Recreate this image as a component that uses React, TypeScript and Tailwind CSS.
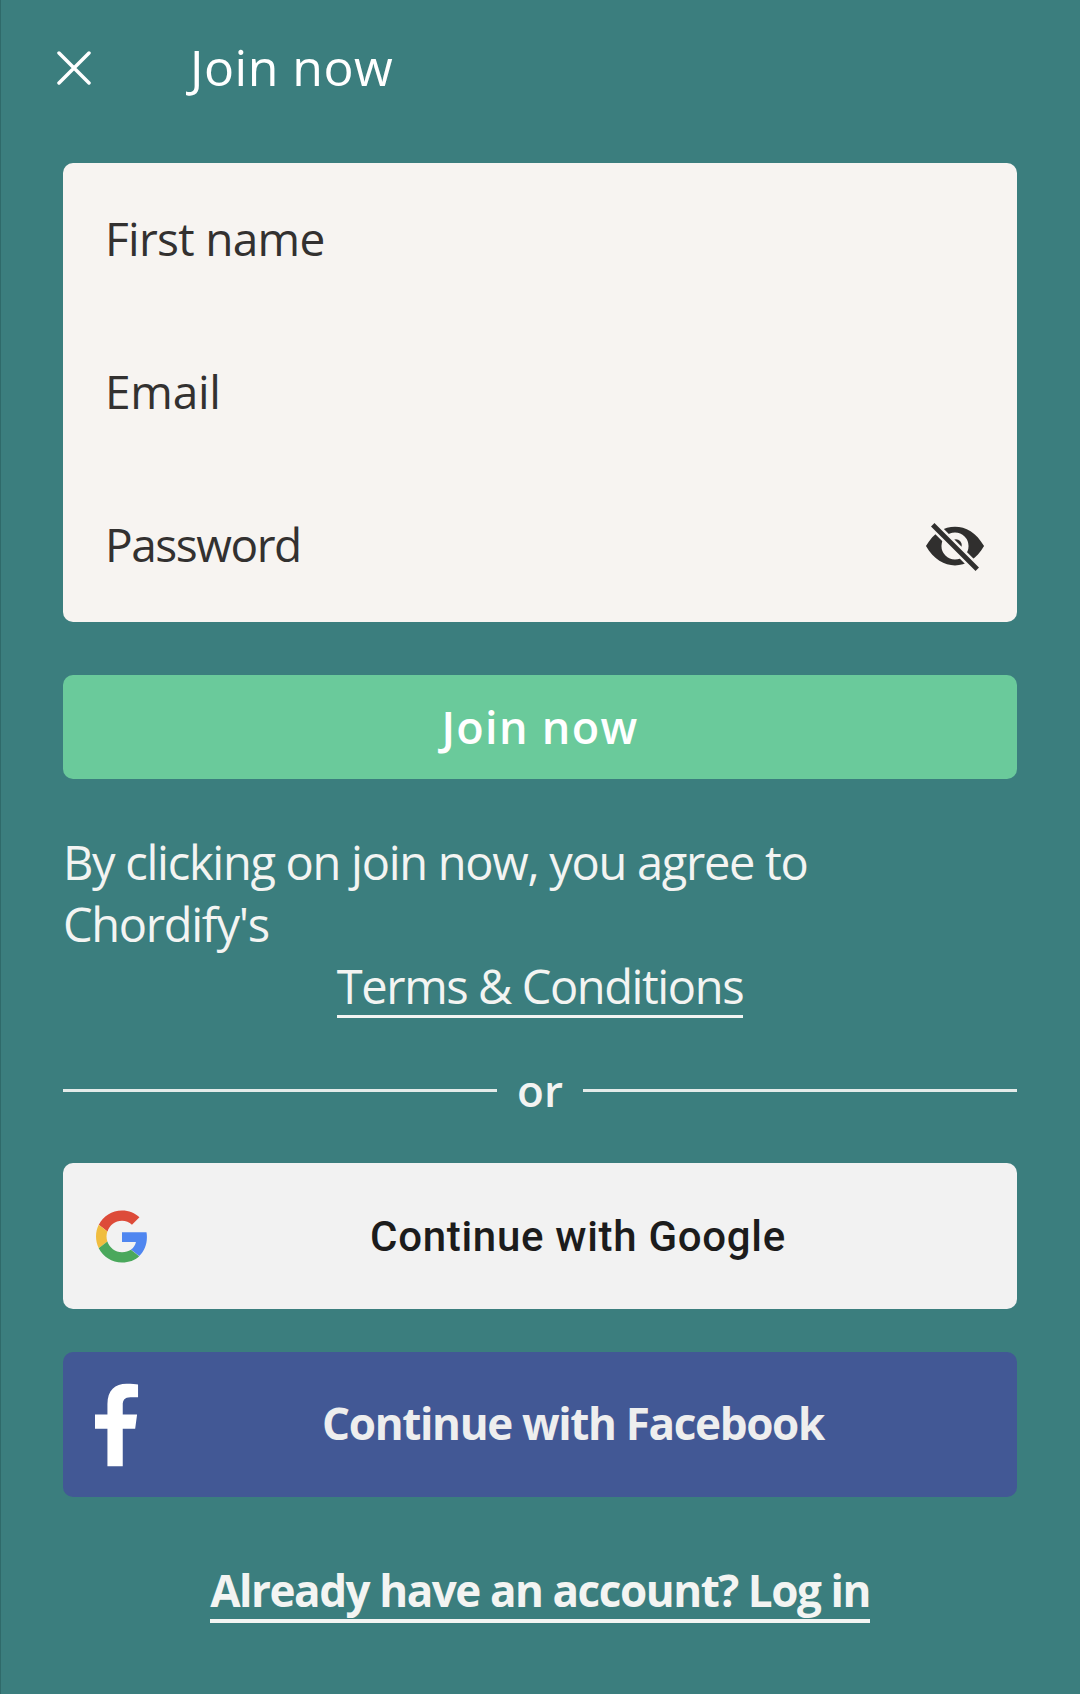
import React from 'react';

const font = "font-['Open_Sans',sans-serif]";

function FormRow({ label, tracking, children }: { label: string; tracking: string; children?: React.ReactNode }) {
  return (
    <div className="h-[153px] flex items-center justify-between pl-[42px] pr-[32px] pb-[4px]">
      <span className={`text-[46px] leading-[60px] text-[#333130] ${tracking}`}>{label}</span>
      {children}
    </div>
  );
}

function EyeOff() {
  return (
    <svg width="60" height="52" viewBox="0 0 62 52" className="mt-[7px]">
      <path
        fillRule="evenodd"
        fill="#302f2e"
        d="M1 25C9 11 20 5 31 5s22 6 30 20c-8 14-19 20-30 20S9 39 1 25zM31 11a14 14 0 1 0 0 28 14 14 0 0 0 0-28z"
      />
      <circle cx="32" cy="24" r="6" fill="#302f2e" />
      <path d="M7 2l48 48" stroke="#f7f4f1" strokeWidth="10" />
      <path d="M8 3l46 46" stroke="#302f2e" strokeWidth="5" />
    </svg>
  );
}

function GoogleLogo() {
  return (
    <svg width="52" height="53" viewBox="0 0 48 48">
      <path fill="#dd4b39" d="M24 9.500c3.500 0 6.700 1.200 9.200 3.600l6.900-6.900C35.900 2.400 30.500 0 24 0 14.600 0 6.500 5.400 2.600 13.200l8 6.200C12.400 13.700 17.700 9.500 24 9.500z" />
      <path fill="#4f86f0" d="M47 24.500c0-1.600-.1-3.100-.4-4.500H24v9h12.900c-.6 3-2.200 5.400-4.700 7.100l7.700 6C44.400 37.900 47 31.800 47 24.500z" />
      <path fill="#f0bd3f" d="M10.500 28.600c-.5-1.400-.8-3-.8-4.600s.3-3.200.8-4.600l-8-6.200C.9 16.500 0 20.100 0 24s.9 7.500 2.600 10.800l7.900-6.200z" />
      <path fill="#4aa85c" d="M24 48c6.500 0 11.900-2.100 15.900-5.800l-7.700-6c-2.200 1.400-4.900 2.300-8.200 2.300-6.300 0-11.600-4.200-13.500-9.900l-8 6.200C6.500 42.600 14.600 48 24 48z" />
    </svg>
  );
}

function FacebookLogo() {
  return (
    <svg width="44" height="84" viewBox="0 0 46 86">
      <path fill="#ffffff" d="M13 86V47H0V32h13V21C13 7 21 0 33 0c5 0 10 .4 12 .7V14h-8c-6 0-8 3-8 8v10h15l-2 15H29v39z" />
    </svg>
  );
}

export default function App() {
  return (
    <div className={`${font} w-full h-[1694px] bg-[#3b7e7e] border-l border-[#2f6a6a] pl-[62px] pr-[63px] text-[#f3f4f2]`}>
      <header className="h-[163px] flex items-start -ml-[6px] pt-[35px]">
        <svg width="34" height="64" viewBox="0 0 34 64" className="shrink-0">
          <path d="M2 18l30 30M32 18L2 48" stroke="#ffffff" strokeWidth="3.500" strokeLinecap="round" />
        </svg>
        <h1 className="ml-[99px] text-[50px] leading-[64px] font-normal text-white tracking-[0.5px]">Join now</h1>
      </header>

      <div className="h-[459px] rounded-[10px] bg-[#f7f4f1]">
        <FormRow label="First name" tracking="tracking-[-0.7px]" />
        <FormRow label="Email" tracking="tracking-[-0.25px]" />
        <FormRow label="Password" tracking="tracking-[-1.44px]">
          <EyeOff />
        </FormRow>
      </div>

      <button className="mt-[53px] w-full h-[104px] rounded-[10px] bg-[#6aca9b] text-[45px] font-semibold text-white tracking-[1.3px]">
        Join now
      </button>

      <p className="mt-[52px] text-[47px] leading-[62px] tracking-[-1.28px]">
        By clicking on join now, you agree to
        <br />
        Chordify's
      </p>
      <div className="flex justify-center">
        <a className="text-[47px] leading-[58px] pt-[2px] tracking-[-1.4px] border-b-[3px] border-[#f3f4f2]">Terms &amp; Conditions</a>
      </div>

      <div className="mt-[44px] flex items-center gap-[20px]">
        <div className="flex-1 h-[3px] bg-[#e3ebe9]" />
        <span className="text-[44px] leading-[56px] font-semibold">or</span>
        <div className="flex-1 h-[3px] bg-[#e3ebe9]" />
      </div>

      <button className="mt-[45px] relative w-full h-[146px] rounded-[10px] bg-[#f2f2f2] flex items-center justify-center pl-[76px]">
        <span className="absolute left-[33px] top-[47px]"><GoogleLogo /></span>
        <span className="font-['Roboto',sans-serif] font-medium text-[42px] text-[#1c1c1c] tracking-[0.7px]">Continue with Google</span>
      </button>

      <button className="mt-[43px] relative w-full h-[145px] rounded-[10px] bg-[#425895] flex items-center justify-center pl-[66px] pb-[4px]">
        <span className="absolute left-[32px] top-[31px]"><FacebookLogo /></span>
        <span className="text-[44px] font-bold text-[#eeeeee] tracking-[-1.35px]">Continue with Facebook</span>
      </button>

      <div className="mt-[65px] flex justify-center">
        <a className="text-[44px] leading-[57px] font-bold tracking-[-1.45px] border-b-[4px] border-[#f3f4f2]">Already have an account? Log in</a>
      </div>
    </div>
  );
}
